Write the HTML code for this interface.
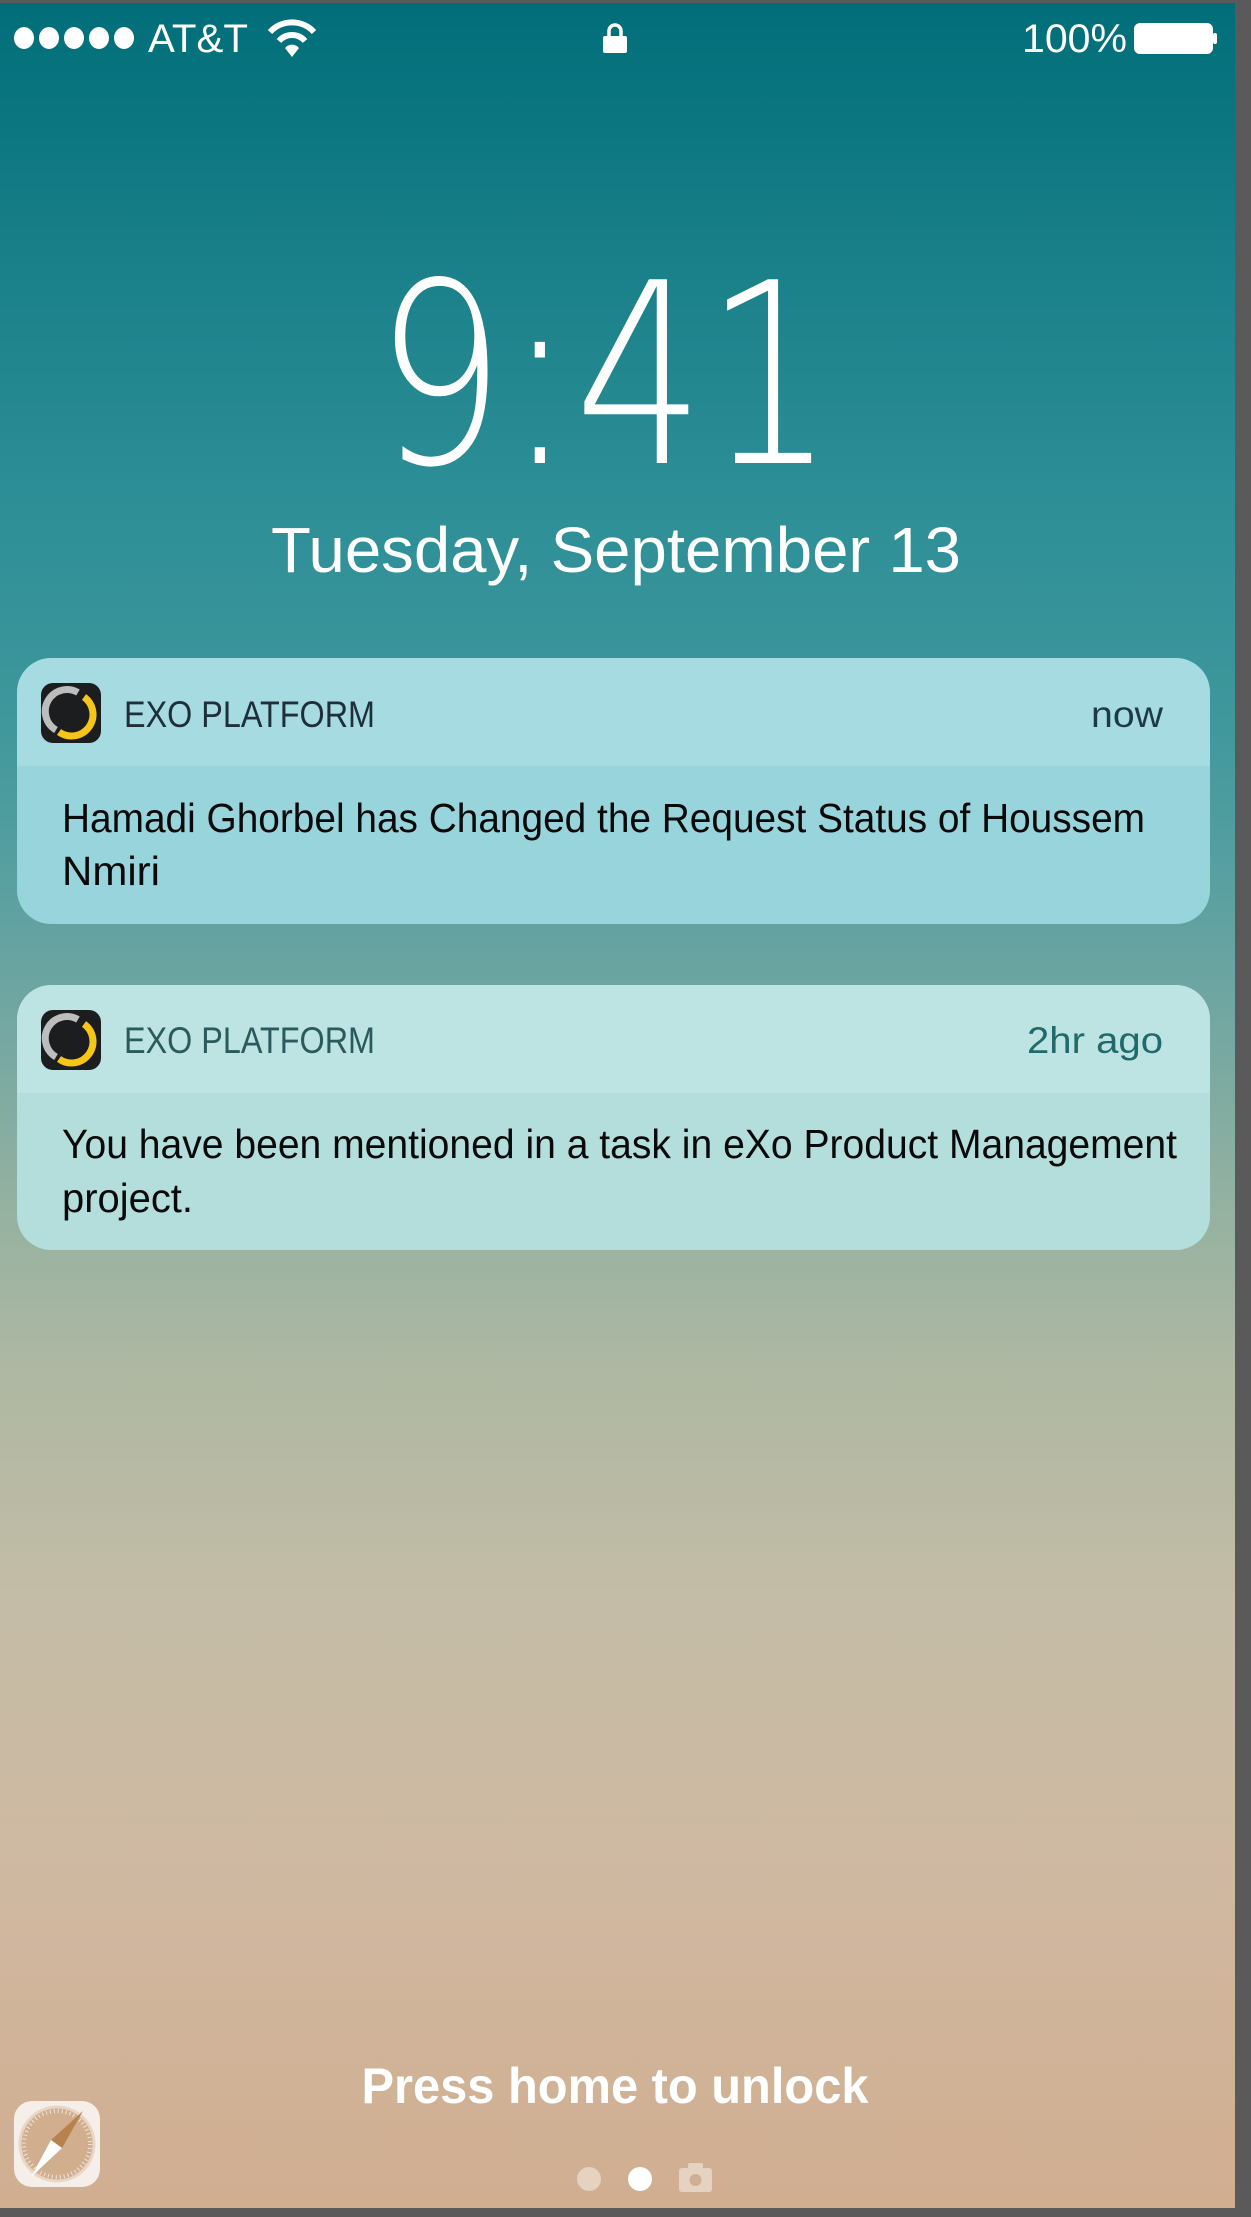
<!DOCTYPE html>
<html><head><meta charset="utf-8"><style>
html,body{margin:0;padding:0}
body{width:1251px;height:2217px;background:#5a5a5a;position:relative;overflow:hidden;font-family:"Liberation Sans",sans-serif}
#scr{position:absolute;left:0;top:3px;width:1235px;height:2205px;background:linear-gradient(to bottom,#006e79 0%,#1a8089 12%,#2c8e96 22%,#3d979b 32%,#5aa0a1 40%,#7aa9a1 48%,#96b2a1 55%,#aeb8a2 62%,#c3bca6 72%,#cfb9a2 84%,#d1ae90 100%)}
svg{position:absolute;left:0;top:0}
</style></head><body>
<div id="scr"></div>
<svg width="1251" height="2217" viewBox="0 0 1251 2217" xmlns="http://www.w3.org/2000/svg">
<g fill="#fff">
<ellipse cx="24" cy="38" rx="10" ry="11"/><ellipse cx="49" cy="38" rx="10" ry="11"/><ellipse cx="74" cy="38" rx="10" ry="11"/><ellipse cx="99" cy="38" rx="10" ry="11"/><ellipse cx="124" cy="38" rx="10" ry="11"/>
<text x="148" y="52" font-size="40" textLength="100" lengthAdjust="spacingAndGlyphs">AT&amp;T</text>
<text x="1022" y="52" font-size="40" textLength="105" lengthAdjust="spacingAndGlyphs">100%</text>
<rect x="1135" y="24" width="77" height="29" rx="5" fill="#fff" stroke="#fff" stroke-width="2"/>
<rect x="1213" y="33" width="4" height="11" rx="2"/>
<rect x="603" y="36" width="24" height="17" rx="2"/>
</g>
<path d="M609 37v-6a6 6 0 0 1 12 0v6" fill="none" stroke="#fff" stroke-width="3.5"/>
<g fill="none" stroke="#fff">
<path d="M270 32a30 30 0 0 1 44 0" stroke-width="6"/>
<path d="M279 41a17 17 0 0 1 26 0" stroke-width="6"/>
</g>
<path d="M285 48a9 9 0 0 1 14 0l-7 9z" fill="#fff"/>
<text x="605" y="463" text-anchor="middle" font-family="DejaVu Sans" font-weight="200" font-size="252" fill="#fff" textLength="460" lengthAdjust="spacingAndGlyphs">9:41</text>
<text x="616" y="572" text-anchor="middle" font-size="64" fill="#fff" textLength="690" lengthAdjust="spacingAndGlyphs">Tuesday, September 13</text>
<defs>
<clipPath id="c1"><rect x="17" y="658" width="1193" height="266" rx="34"/></clipPath>
<clipPath id="c2"><rect x="17" y="985" width="1193" height="265" rx="34"/></clipPath>
</defs>
<g clip-path="url(#c1)">
<rect x="17" y="658" width="1193" height="108" fill="#a5dbe1"/>
<rect x="17" y="766" width="1193" height="158" fill="#98d4db"/>
</g>
<g clip-path="url(#c2)">
<rect x="17" y="985" width="1193" height="108" fill="#bde4e3"/>
<rect x="17" y="1093" width="1193" height="157" fill="#b3dedc"/>
</g>
<g>
<rect x="41" y="683" width="60" height="60" rx="12" fill="#1b1d1f"/>
<path d="M78 692.5A21 21 0 0 0 56 730" fill="none" stroke="#bdbdbd" stroke-width="7"/>
<path d="M84 697A21 21 0 0 1 59 732" fill="none" stroke="#f5c518" stroke-width="7"/>
</g>
<g transform="translate(0,327)">
<rect x="41" y="683" width="60" height="60" rx="12" fill="#1b1d1f"/>
<path d="M78 692.5A21 21 0 0 0 56 730" fill="none" stroke="#bdbdbd" stroke-width="7"/>
<path d="M84 697A21 21 0 0 1 59 732" fill="none" stroke="#f5c518" stroke-width="7"/>
</g>
<g font-size="37">
<text x="124" y="727" fill="#1e2f3a" textLength="251" lengthAdjust="spacingAndGlyphs">EXO PLATFORM</text>
<text x="1091" y="727" fill="#1e3a48" textLength="72" lengthAdjust="spacingAndGlyphs">now</text>
<text x="124" y="1053" fill="#2a5a5c" textLength="251" lengthAdjust="spacingAndGlyphs">EXO PLATFORM</text>
<text x="1027" y="1053" fill="#1f6a6b" textLength="136" lengthAdjust="spacingAndGlyphs">2hr ago</text>
</g>
<g font-size="41" fill="#0a0a0a">
<text x="62" y="832" textLength="1083" lengthAdjust="spacingAndGlyphs">Hamadi Ghorbel has Changed the Request Status of Houssem</text>
<text x="62" y="885" textLength="98" lengthAdjust="spacingAndGlyphs">Nmiri</text>
<text x="62" y="1158" textLength="1115" lengthAdjust="spacingAndGlyphs">You have been mentioned in a task in eXo Product Management</text>
<text x="62" y="1212" textLength="131" lengthAdjust="spacingAndGlyphs">project.</text>
</g>
<text x="615" y="2103" text-anchor="middle" font-size="50" font-weight="bold" fill="#fff" textLength="507" lengthAdjust="spacingAndGlyphs">Press home to unlock</text>
<circle cx="589" cy="2179" r="12" fill="#e6d2c0"/>
<circle cx="640" cy="2179" r="12" fill="#fff"/>
<rect x="679" y="2168" width="33" height="24" rx="3" fill="#e6d2c0"/>
<rect x="688" y="2163" width="15" height="6" rx="2" fill="#e6d2c0"/>
<circle cx="695.5" cy="2180" r="6" fill="#cfae92"/>
<rect x="14" y="2101" width="86" height="86" rx="18" fill="#f6eee8"/>
<circle cx="57" cy="2144" r="37" fill="#d1ae8e" stroke="#e8d6c6" stroke-width="3"/>
<circle cx="57" cy="2144" r="33" fill="none" stroke="#f0e4d8" stroke-width="4" stroke-dasharray="1 3"/>
<path d="M83 2111L62 2148L51 2140z" fill="#b8824f"/>
<path d="M31 2177L51 2140L62 2148z" fill="#fff"/>
</svg>
</body></html>
